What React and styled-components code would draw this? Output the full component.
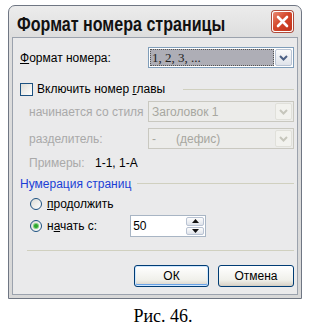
import React from "react";
import styled, { createGlobalStyle } from "styled-components";

const GlobalStyle = createGlobalStyle`
  body {
    margin: 0;
    background: #fff;
    font-family: "Liberation Sans", Arial, sans-serif;
  }
`;

const Page = styled.div`
  width: 315px;
  padding: 5px 0 0 8px;
  box-sizing: border-box;
`;

const Window = styled.div`
  width: 294px;
  box-sizing: border-box;
  border: 1px solid #6f7683;
  border-radius: 7px 7px 0 0;
  background: linear-gradient(#ececec, #dedede 30px, #d8d8d8);
  display: flex;
  flex-direction: column;
`;

const TitleBar = styled.div`
  height: 31px;
  display: flex;
  align-items: center;
  justify-content: space-between;
  padding: 0 8px 0 8px;
`;

const Title = styled.span`
  flex: 1;
  min-width: 0;
  font-size: 21px;
  font-weight: bold;
  color: #111;
  white-space: nowrap;
  margin-top: 4px;
  transform: scaleX(0.765);
  transform-origin: left center;
`;

const CloseButton = styled.div`
  flex-shrink: 0;
  width: 21px;
  height: 21px;
  box-sizing: border-box;
  border: 1px solid #fff;
  border-radius: 3px;
  background: linear-gradient(135deg, #e88a74, #d4472a 45%, #c0331c);
  box-shadow: 0 0 0 1px #b04a3a;
  display: flex;
  align-items: center;
  justify-content: center;
`;

const Body = styled.div`
  margin: 0 3px 3px 3px;
  border: 1px solid #9ba2ad;
  background: #eaeaeb;
  padding: 0 3px 7px 7px;
  display: flex;
  flex-direction: column;
  font-size: 12px;
  color: #000;
`;

const Row = styled.div`
  display: flex;
  align-items: center;
  height: ${(p) => p.h || 21}px;
  margin-top: ${(p) => p.mt || 0}px;
  padding-left: ${(p) => p.indent || 0}px;
`;

const Label = styled.span`
  width: ${(p) => p.w}px;
  flex-shrink: 0;
  color: ${(p) => (p.disabled ? "#a9a9a9" : "#000")};
`;

const Select = styled.div`
  flex: 1;
  height: 100%;
  display: flex;
  box-sizing: border-box;
  border: 1px solid ${(p) => (p.disabled ? "#c9c8c0" : "#7f9db9")};
  background: ${(p) => (p.disabled ? "#ececea" : "#fff")};
  padding: 1px;
`;

const SelectValue = styled.div`
  flex: 1;
  display: flex;
  align-items: center;
  padding-left: 2px;
  margin-right: 1px;
  color: ${(p) => (p.disabled ? "#a7a7a0" : "#222")};
  background: ${(p) => (p.active ? "#aeaeb6" : "transparent")};
  outline: ${(p) => (p.active ? "1px dotted #555" : "none")};
  outline-offset: -1px;
  font-family: ${(p) => (p.serif ? '"Liberation Serif", serif' : "inherit")};
  font-size: ${(p) => (p.serif ? "13px" : "12px")};
  white-space: pre;
`;

const DropButton = styled.div`
  width: 17px;
  display: flex;
  align-items: center;
  justify-content: center;
  box-sizing: border-box;
  border: 1px solid ${(p) => (p.disabled ? "#e0e0da" : "#b9c3d3")};
  border-radius: 2px;
  background: ${(p) =>
    p.disabled ? "#f2f2ee" : "linear-gradient(#fbfbfb, #dfe3ea)"};
`;

const Check = styled.div`
  width: 13px;
  height: 13px;
  box-sizing: border-box;
  border: 1px solid #1c5180;
  background: linear-gradient(135deg, #dcdcd6, #fff);
  margin-right: 4px;
`;

const Rule = styled.div`
  flex: 1;
  height: 1px;
  background: #d0d0bf;
  margin-left: ${(p) => p.ml || 0}px;
`;

const Heading = styled.span`
  color: #1b3fd6;
`;

const Radio = styled.div`
  width: 12px;
  height: 12px;
  box-sizing: border-box;
  border-radius: 50%;
  border: 1px solid #1c5180;
  background: linear-gradient(135deg, #dcdcd6, #fff);
  margin-right: 5px;
  display: flex;
  align-items: center;
  justify-content: center;

  &::after {
    content: "";
    display: ${(p) => (p.checked ? "block" : "none")};
    width: 4px;
    height: 4px;
    border-radius: 50%;
    background: #2ea52e;
    box-shadow: 0 0 0 1px #7fd07f;
  }
`;

const SpinField = styled.div`
  width: 76px;
  height: 22px;
  margin-left: ${(p) => p.ml}px;
  box-sizing: border-box;
  border: 1px solid #a8b5c4;
  background: #fff;
  display: flex;
  padding: 1px;
`;

const SpinValue = styled.div`
  flex: 1;
  display: flex;
  align-items: center;
  padding-left: 1px;
  font-size: 12px;
`;

const SpinButtons = styled.div`
  width: 18px;
  display: flex;
  flex-direction: column;
  gap: 1px;
`;

const SpinButton = styled.div`
  flex: 1;
  display: flex;
  align-items: center;
  justify-content: center;
  border: 1px solid #b9c3d3;
  border-radius: 2px;
  background: linear-gradient(#fdfdfd, #dfe3ea);
`;

const Separator = styled.div`
  height: 1px;
  margin: 13px 0 0 7px;
  background: #d0d0bf;
`;

const Buttons = styled.div`
  display: flex;
  justify-content: flex-end;
  gap: 9px;
  margin-top: 14px;
`;

const Button = styled.div`
  width: ${(p) => p.w}px;
  height: 22px;
  box-sizing: border-box;
  border: 1px solid #003c74;
  border-radius: 3px;
  background: linear-gradient(#ffffff, #f0f0ea 70%, #d6d0c5);
  box-shadow: ${(p) =>
    p.primary
      ? "inset 0 0 0 1px #cee7ff, inset 0 -1px 0 1px #69a2e6"
      : "inset 0 -1px 0 #d6d0c5"};
  display: flex;
  align-items: center;
  justify-content: center;
  font-size: 12px;
`;

const Caption = styled.div`
  margin-top: 7px;
  padding-left: 8px;
  width: 294px;
  text-align: center;
  font-family: "Liberation Serif", "Times New Roman", serif;
  font-size: 18px;
  line-height: 20px;
`;

const Chevron = ({ disabled }) => (
  <svg width="9" height="6" viewBox="0 0 9 6">
    <path
      d="M1 1 L4.5 4.5 L8 1"
      fill="none"
      stroke={disabled ? "#c6c6bc" : "#4d6185"}
      strokeWidth="2"
    />
  </svg>
);

const Arrow = ({ up }) => (
  <svg width="7" height="4" viewBox="0 0 7 4">
    <path d={up ? "M0 4 L3.5 0 L7 4 Z" : "M0 0 L3.5 4 L7 0 Z"} fill="#111" />
  </svg>
);

function App() {
  return (
    <Page>
      <GlobalStyle />
      <Window>
        <TitleBar>
          <Title>Формат номера страницы</Title>
          <CloseButton>
            <svg width="13" height="13" viewBox="0 0 13 13">
              <path
                d="M2 2 L11 11 M11 2 L2 11"
                stroke="#fff"
                strokeWidth="2.6"
                strokeLinecap="round"
              />
            </svg>
          </CloseButton>
        </TitleBar>
        <Body>
          <Row mt={9}>
            <Label w={128}>
              <u>Ф</u>ормат номера:
            </Label>
            <Select>
              <SelectValue active serif>
                1, 2, 3, ...
              </SelectValue>
              <DropButton>
                <Chevron />
              </DropButton>
            </Select>
          </Row>
          <Row mt={14} h={14}>
            <Check />
            <span>
              Включить номер <u>г</u>лавы
            </span>
            <Rule ml={18} />
          </Row>
          <Row mt={5} indent={9}>
            <Label w={119} disabled>
              начинается со стиля
            </Label>
            <Select disabled>
              <SelectValue disabled>Заголовок 1</SelectValue>
              <DropButton disabled>
                <Chevron disabled />
              </DropButton>
            </Select>
          </Row>
          <Row mt={6} indent={9}>
            <Label w={119} disabled>
              разделитель:
            </Label>
            <Select disabled>
              <SelectValue disabled>{"-      (дефис)"}</SelectValue>
              <DropButton disabled>
                <Chevron disabled />
              </DropButton>
            </Select>
          </Row>
          <Row mt={6} h={15} indent={9}>
            <Label w={66} disabled>
              Примеры:
            </Label>
            <span>1-1, 1-А</span>
          </Row>
          <Row mt={6} h={15}>
            <Heading>Нумерация страниц</Heading>
            <Rule ml={6} />
          </Row>
          <Row mt={5} h={15} indent={10}>
            <Radio />
            <span>
              <u>п</u>родолжить
            </span>
          </Row>
          <Row mt={4} h={22} indent={10}>
            <Radio checked />
            <span>
              н<u>а</u>чать с:
            </span>
            <SpinField ml={33}>
              <SpinValue>50</SpinValue>
              <SpinButtons>
                <SpinButton>
                  <Arrow up />
                </SpinButton>
                <SpinButton>
                  <Arrow />
                </SpinButton>
              </SpinButtons>
            </SpinField>
          </Row>
          <Separator />
          <Buttons>
            <Button w={75} primary>
              ОК
            </Button>
            <Button w={76}>Отмена</Button>
          </Buttons>
        </Body>
      </Window>
      <Caption>Рис. 46.</Caption>
    </Page>
  );
}

export default App;
